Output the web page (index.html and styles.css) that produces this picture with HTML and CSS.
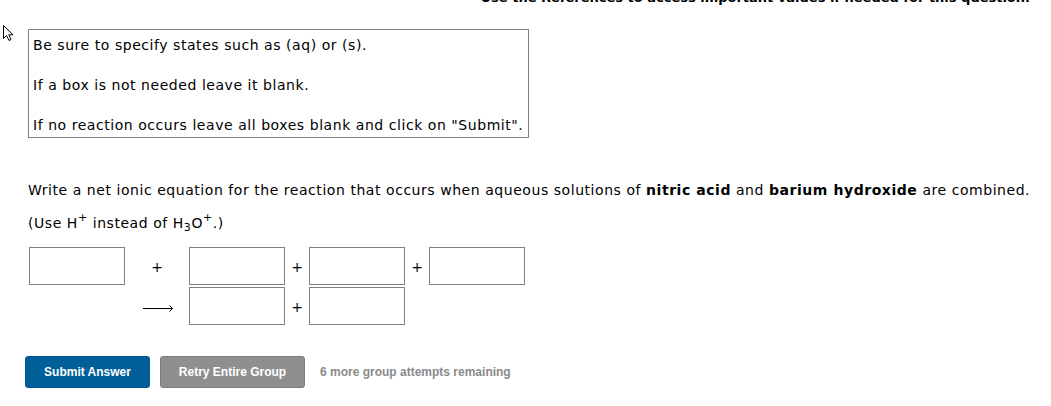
FILE: index.html
```html
<!DOCTYPE html>
<html lang="en">
<head>
<meta charset="utf-8">
<title>Net ionic equation</title>
<link rel="stylesheet" href="styles.css">
</head>
<body>
<svg class="cursor" width="14" height="18" viewBox="0 0 14 18" aria-hidden="true">
  <path d="M1.5 1.5 L1.5 14.5 L4.5 11.5 L7 16.5 L9 15.5 L6.8 10.8 L11 10.8 Z" fill="#fff" stroke="#000" stroke-width="1" stroke-linejoin="miter"/>
</svg>
<div class="page">
  <div class="refs">Use the References to access important values if needed for this question.</div>
  <div class="notice">
    <div class="notice-line">Be sure to specify states such as (aq) or (s).</div>
    <div class="notice-line">If a box is not needed leave it blank.</div>
    <div class="notice-line">If no reaction occurs leave all boxes blank and click on "Submit".</div>
  </div>
  <p class="question">Write a net ionic equation for the reaction that occurs when aqueous solutions of <b>nitric acid</b> and <b>barium hydroxide</b> are combined.</p>
  <p class="question q2">(Use H<sup>+</sup> instead of H<sub>3</sub>O<sup>+</sup>.)</p>
  <div class="equation">
    <input class="box" type="text" aria-label="reactant 1">
    <span class="op">+</span>
    <input class="box" type="text" aria-label="reactant 2">
    <span class="op">+</span>
    <input class="box" type="text" aria-label="reactant 3">
    <span class="op">+</span>
    <input class="box" type="text" aria-label="reactant 4">
    <span class="empty"></span>
    <span class="op arrow"><svg width="31" height="8" viewBox="0 0 31 8" aria-hidden="true"><path d="M0 4.5 H29.5" stroke="#000" stroke-width="1"/><path d="M26.5 1.5 L29.5 4.5 L26.5 7.5" fill="none" stroke="#000" stroke-width="1"/></svg></span>
    <input class="box" type="text" aria-label="product 1">
    <span class="op">+</span>
    <input class="box" type="text" aria-label="product 2">
  </div>
  <div class="actions">
    <button class="btn btn-primary" type="button">Submit Answer</button>
    <button class="btn btn-secondary" type="button">Retry Entire Group</button>
    <span class="remaining">6 more group attempts remaining</span>
  </div>
</div>
</body>
</html>
```
FILE: styles.css
```css
html, body {
  margin: 0;
  padding: 0;
  background: #fff;
}
body {
  font-family: "DejaVu Sans", Verdana, sans-serif;
  font-size: 14px;
  letter-spacing: 0.55px;
  color: #000;
  overflow: hidden;
}
.cursor {
  position: absolute;
  left: 2px;
  top: 24px;
}
.page {
  padding-left: 28px;
}
.refs {
  margin-top: -9px;
  height: 38px;
  line-height: 13px;
  font-size: 13px;
  letter-spacing: 0;
  text-align: right;
  padding-right: 21px;
  font-weight: bold;
  white-space: nowrap;
}
.notice {
  display: inline-block;
  border: 1px solid #808080;
  padding: 5px 5px 2px 4px;
  line-height: 20px;
}
.notice-line + .notice-line {
  margin-top: 20px;
}
.question {
  margin: 42px 0 0 0;
  line-height: 20px;
  white-space: nowrap;
}
.question b {
  font-weight: bold;
}
.q2 {
  margin-top: 13px;
}
.question sup, .question sub {
  font-size: 11px;
  line-height: 0;
  position: relative;
  vertical-align: baseline;
}
.question sup { top: -7px; }
.question sub { top: 3px; }
.equation {
  margin-top: 14px;
  margin-left: 1px;
  display: grid;
  grid-template-columns: 96px 64px 96px 24px 96px 24px 96px;
  grid-template-rows: 38px 38px;
  row-gap: 2px;
}
.box {
  box-sizing: border-box;
  width: 96px;
  height: 38px;
  margin: 0;
  border: 1px solid #808080;
  background: #fff;
  padding: 0 4px;
  font: inherit;
}
.op {
  display: flex;
  align-items: center;
  justify-content: center;
  font-size: 14px;
  letter-spacing: 0;
  padding-top: 2px;
}
.arrow {
  padding-left: 2px;
  align-items: flex-start;
  padding-top: 17px;
}
.arrow svg {
  display: block;
}
.actions {
  margin-top: 31px;
  margin-left: -3px;
  display: flex;
  align-items: center;
  gap: 10px;
  letter-spacing: 0;
}
.btn {
  box-sizing: border-box;
  height: 32px;
  border-radius: 3px;
  font-family: "Liberation Sans", Arial, sans-serif;
  font-size: 12px;
  font-weight: bold;
  color: #fff;
  cursor: pointer;
  margin: 0;
}
.btn-primary {
  width: 125px;
  background: #005f99;
  border: 1px solid #005a91;
}
.btn-secondary {
  width: 145px;
  background: #8f8f8f;
  border: 1px solid #7d7d7d;
}
.remaining {
  margin-left: 5px;
  font-family: "Liberation Sans", Arial, sans-serif;
  font-size: 12px;
  font-weight: bold;
  color: #8a8a8a;
}
```
